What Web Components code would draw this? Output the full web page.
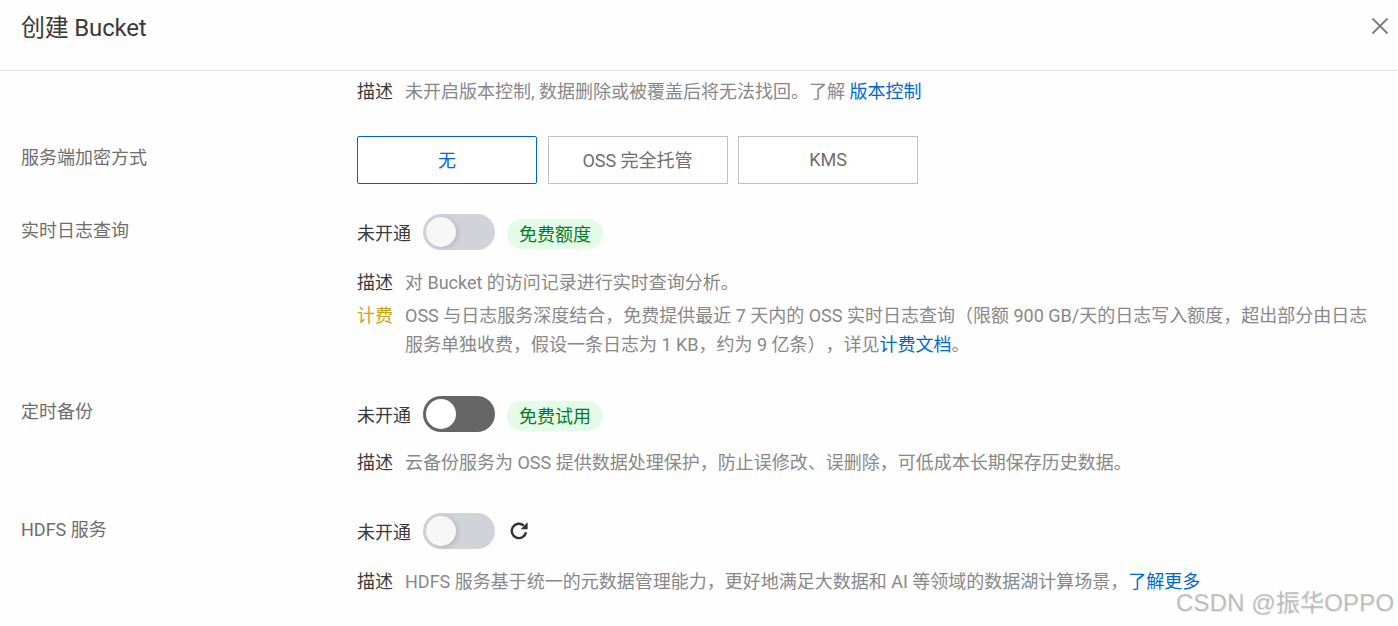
<!DOCTYPE html>
<html lang="zh">
<head>
<meta charset="utf-8">
<title>创建 Bucket</title>
<style>
  html, body { margin: 0; padding: 0; background: #fefefe; }
  body {
    width: 1398px; height: 626px; overflow: hidden; position: relative;
    font-family: Roboto, "Noto Sans CJK SC", sans-serif;
    font-size: 18px; color: #333;
    text-spacing-trim: space-all;
  }
</style>
</head>
<body>
<bucket-header>创建 Bucket</bucket-header>
<div style="height:6px"></div>
<form-row>
  <info-line label="描述">未开启版本控制, 数据删除或被覆盖后将无法找回。了解 <text-link>版本控制</text-link></info-line>
</form-row>
<form-row label="服务端加密方式" style="margin-top:30px;--label-h:44px">
  <radio-group>
    <radio-button selected>无</radio-button>
    <radio-button>OSS 完全托管</radio-button>
    <radio-button>KMS</radio-button>
  </radio-group>
</form-row>
<form-row label="实时日志查询" style="margin-top:30px;--label-h:34px">
  <switch-line>未开通<toggle-switch></toggle-switch><green-tag>免费额度</green-tag></switch-line>
  <info-line label="描述" style="margin-top:18px">对 Bucket 的访问记录进行实时查询分析。</info-line>
  <info-line label="计费" tone="warn" style="margin-top:4px">OSS 与日志服务深度结合，免费提供最近 7 天内的 OSS 实时日志查询（限额 900 GB/天的日志写入额度，超出部分由日志服务单独收费，假设一条日志为 1 KB，约为 9 亿条），详见<text-link>计费文档</text-link>。</info-line>
</form-row>
<form-row label="定时备份" style="margin-top:37px">
  <switch-line>未开通<toggle-switch dark></toggle-switch><green-tag>免费试用</green-tag></switch-line>
  <info-line label="描述" style="margin-top:16px">云备份服务为 OSS 提供数据处理保护，防止误修改、误删除，可低成本长期保存历史数据。</info-line>
</form-row>
<form-row label="HDFS 服务" style="margin-top:36px;--label-h:34px">
  <switch-line>未开通<toggle-switch></toggle-switch><refresh-icon></refresh-icon></switch-line>
  <info-line label="描述" style="margin-top:18px">HDFS 服务基于统一的元数据管理能力，更好地满足大数据和 AI 等领域的数据湖计算场景，<text-link>了解更多</text-link></info-line>
</form-row>
<water-mark>CSDN @振华OPPO</water-mark>

<script>
function define(name, html, setup) {
  customElements.define(name, class extends HTMLElement {
    connectedCallback() {
      if (this.shadowRoot) return;
      this.attachShadow({ mode: 'open' });
      // trim: leading whitespace would render as a space in inline hosts
      this.shadowRoot.innerHTML = html.trim();
      if (setup) setup(this);
    }
  });
}

define('bucket-header', `
  <style>
    :host { display: flex; align-items: center; justify-content: space-between; height: 70px; padding: 0 9px 0 21px;
      border-bottom: 1px solid #e6e6e6; font-size: 24px; color: #3a3a3a; line-height: 56px; letter-spacing: -.2px; }
    span { position: relative; top: -7px; }
    svg { display: block; margin-top: -18px; }
  </style>
  <span><slot></slot></span>
  <svg width="18" height="18" viewBox="0 0 18 18" fill="none" stroke="#808080" stroke-width="2"><path d="M1.5 1.5 16.5 16.5M16.5 1.5 1.5 16.5"/></svg>
`);

define('form-row', `
  <style>
    :host { display: flex; align-items: flex-start; padding: 0 21px; }
    .label { width: 336px; flex: none; color: #6e6e6e; line-height: var(--label-h, 32px); white-space: nowrap; }
    .body { flex: 1; min-width: 0; }
  </style>
  <div class="label"></div>
  <div class="body"><slot></slot></div>
`, el => { el.shadowRoot.querySelector('.label').textContent = el.getAttribute('label') || ''; });

define('info-line', `
  <style>
    :host { display: flex; line-height: 29px; color: #888; }
    .tag { flex: none; width: 48px; color: #3a3a3a; white-space: nowrap; }
    :host([tone=warn]) .tag { color: #c8a415; }
    .text { flex: 1; min-width: 0; }
  </style>
  <div class="tag"></div>
  <div class="text"><slot></slot></div>
`, el => { el.shadowRoot.querySelector('.tag').textContent = el.getAttribute('label'); });

define('text-link', `
  <style>:host { display: inline; color: #0068cc; }</style><slot></slot>
`);

define('radio-group', `
  <style>:host { display: flex; gap: 10.5px; }</style><slot></slot>
`);

define('radio-button', `
  <style>
    :host { display: flex; align-items: center; justify-content: center; box-sizing: border-box;
      width: 180px; height: 48px; padding-bottom: 2px; border: 1px solid #c1c1c1; color: #6e6e6e; background: #fff; }
    :host([selected]) { border-color: #0064c8; color: #0068cc; border-radius: 2px; }
  </style><slot></slot>
`);

define('switch-line', `
  <style>:host { display: flex; align-items: center; height: 36px; color: #3a3a3a; white-space: nowrap; }</style><slot></slot>
`);

define('toggle-switch', `
  <style>
    :host { display: block; box-sizing: border-box; width: 72px; height: 36px; margin-left: 12px; padding: 3px;
      border-radius: 18px; background: #d0d3d8; }
    :host([dark]) { background: #666; }
    i { display: block; width: 30px; height: 30px; border-radius: 50%; background: #f6f6f6;
      box-shadow: 2px 1px 5px rgba(0,0,0,.14); }
    :host([dark]) i { background: #fff; box-shadow: none; }
  </style><i></i>
`);

define('green-tag', `
  <style>
    :host { display: block; height: 30px; line-height: 31px; margin: 4px 0 0 12px; padding: 0 12px; border-radius: 15px;
      background: #e4fbe8; color: #0a7a22; }
  </style><slot></slot>
`);

define('refresh-icon', `
  <style>
    :host { display: block; margin-left: 14px; width: 20px; height: 20px; }
    svg { display: block; }
  </style>
  <svg width="20" height="20" viewBox="0 0 20 20" fill="none">
    <path d="M17 11.2A7.2 7.2 0 1 1 14.8 4.6" stroke="#333" stroke-width="2.4"/>
    <path d="M18.6 1.2V8.2H11.6Z" fill="#333"/>
  </svg>
`);

define('water-mark', `
  <style>
    :host { position: absolute; right: 4px; top: 588px; font-family: "Liberation Sans", "Noto Sans CJK SC", sans-serif;
      font-size: 24px; line-height: 30px; color: rgba(120,120,120,.42); white-space: nowrap; letter-spacing: .15px;
      text-shadow: 1px 1px 1px rgba(120,120,120,.18); }
  </style><slot></slot>
`);
</script>
</body>
</html>
